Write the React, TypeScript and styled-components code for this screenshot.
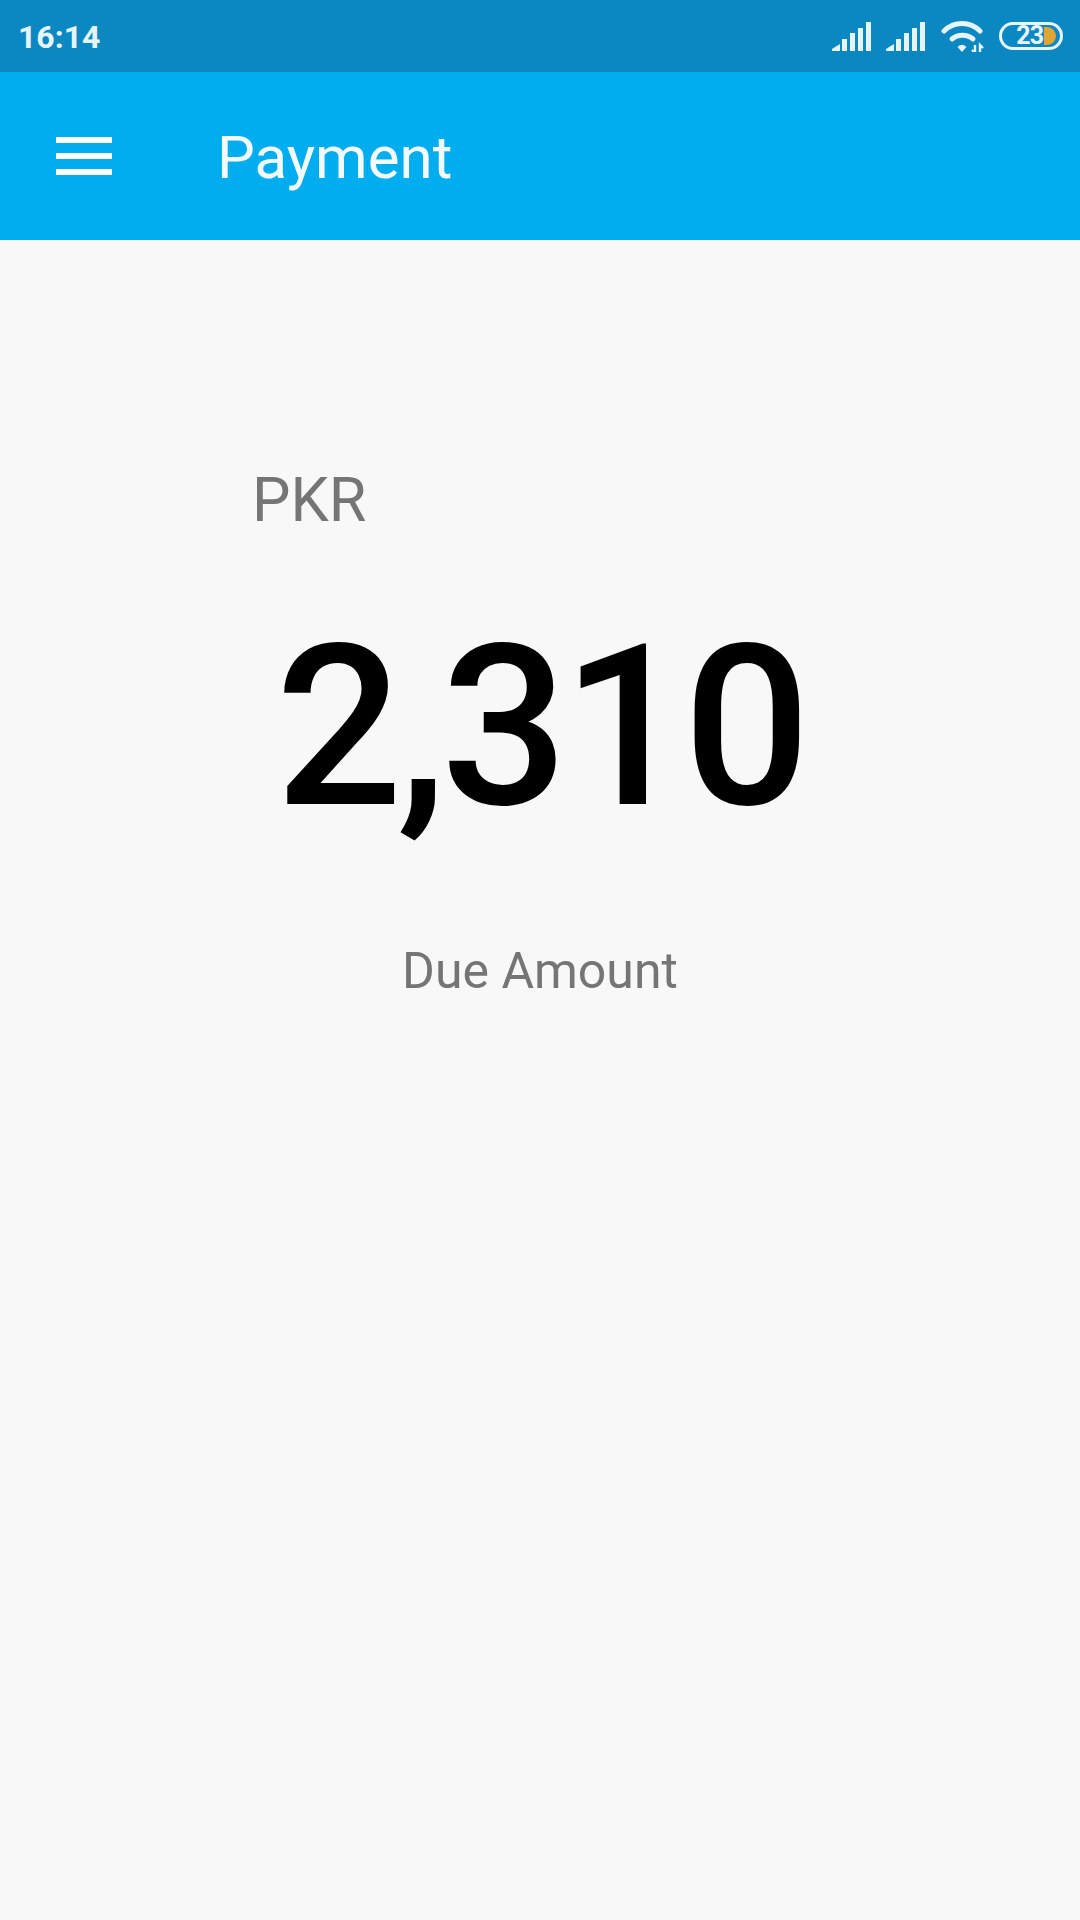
import React from 'react';
import styled, { createGlobalStyle } from 'styled-components';

const GlobalStyle = createGlobalStyle`
  html, body {
    margin: 0;
    padding: 0;
    background: #f8f8f8;
  }
`;

const Page = styled.div`
  width: 1080px;
  height: 1920px;
  display: flex;
  flex-direction: column;
  overflow: hidden;
  background: #f8f8f8;
  font-family: Roboto, "Liberation Sans", sans-serif;
`;

const StatusBar = styled.div`
  height: 72px;
  flex: none;
  display: flex;
  align-items: center;
  justify-content: space-between;
  padding: 0 17px 0 18px;
  background: #0b87c1;
  color: #e6f5fc;
`;

const Clock = styled.span`
  padding-top: 2px;
  font-size: 32px;
  font-weight: 700;
  line-height: 70px;
`;

const StatusIcons = styled.div`
  display: flex;
  align-items: center;
`;

const SignalIcon = styled.svg`
  width: 39px;
  height: 29px;
  margin-right: 15px;
  display: block;
`;

const WifiIcon = styled.svg`
  width: 44px;
  height: 32px;
  margin: 0 14px 0 1px;
  display: block;
`;

const Battery = styled.div`
  box-sizing: border-box;
  width: 64px;
  height: 28px;
  display: flex;
  align-items: center;
  justify-content: flex-end;
  padding-right: 4px;
  border: 3px solid #e6f5fc;
  border-radius: 14px;
`;

const BatteryLevel = styled.span`
  font-size: 25px;
  font-weight: 700;
  line-height: 22px;
  letter-spacing: -1px;
`;

const BatteryCharge = styled.span`
  width: 12px;
  height: 18px;
  margin-left: 1px;
  border-radius: 0 9px 9px 0;
  background: #e2a437;
`;

const Toolbar = styled.header`
  height: 168px;
  flex: none;
  display: flex;
  align-items: center;
  background: #00adef;
  color: #f4fbfe;
`;

const MenuButton = styled.div`
  width: 56px;
  height: 38px;
  margin-left: 56px;
  display: flex;
  flex-direction: column;
  justify-content: space-between;
`;

const MenuBar = styled.span`
  height: 6px;
  background: #ffffff;
`;

const Title = styled.h1`
  margin: 4px 0 0 105px;
  font-size: 60px;
  font-weight: 400;
  line-height: 70px;
`;

const Content = styled.main`
  flex: 1;
  display: flex;
  flex-direction: column;
  padding-top: 224px;
`;

const Currency = styled.div`
  margin-left: 252px;
  font-size: 61px;
  line-height: 72px;
  color: #757575;
`;

const Amount = styled.div`
  margin-top: 52px;
  font-size: 224px;
  font-weight: 500;
  line-height: 280px;
  letter-spacing: -6px;
  text-align: center;
  color: #000000;
`;

const Caption = styled.div`
  margin-top: 73px;
  font-size: 50px;
  line-height: 60px;
  text-align: center;
  color: #757575;
`;

const Signal = () => (
  <SignalIcon viewBox="0 0 39 29" fill="#e6f5fc">
    <path d="M0 29V27L8 22V29Z" />
    <rect x="10" y="17" width="5" height="12" />
    <rect x="18" y="11" width="5" height="18" />
    <rect x="26" y="6" width="5" height="23" />
    <rect x="34" y="0" width="5" height="29" />
  </SignalIcon>
);

export default function App() {
  return (
    <Page>
      <GlobalStyle />
      <StatusBar>
        <Clock>16:14</Clock>
        <StatusIcons>
          <Signal />
          <Signal />
          <WifiIcon viewBox="0 0 44 32" fill="none" stroke="#e6f5fc">
            <path d="M3 11C13 1 29 1 39 11" strokeWidth="5" strokeLinecap="round" />
            <path d="M11 19C17 14 26 14 32 19" strokeWidth="5" strokeLinecap="round" />
            <path d="M16.5 27Q21 22.5 25.5 27L21 32Z" fill="#e6f5fc" stroke="none" />
            <path d="M34 25V33L31 30M39 33V25L42 28" strokeWidth="2.4" />
          </WifiIcon>
          <Battery>
            <BatteryLevel>23</BatteryLevel>
            <BatteryCharge />
          </Battery>
        </StatusIcons>
      </StatusBar>
      <Toolbar>
        <MenuButton>
          <MenuBar />
          <MenuBar />
          <MenuBar />
        </MenuButton>
        <Title>Payment</Title>
      </Toolbar>
      <Content>
        <Currency>PKR</Currency>
        <Amount>2,310</Amount>
        <Caption>Due Amount</Caption>
      </Content>
    </Page>
  );
}
